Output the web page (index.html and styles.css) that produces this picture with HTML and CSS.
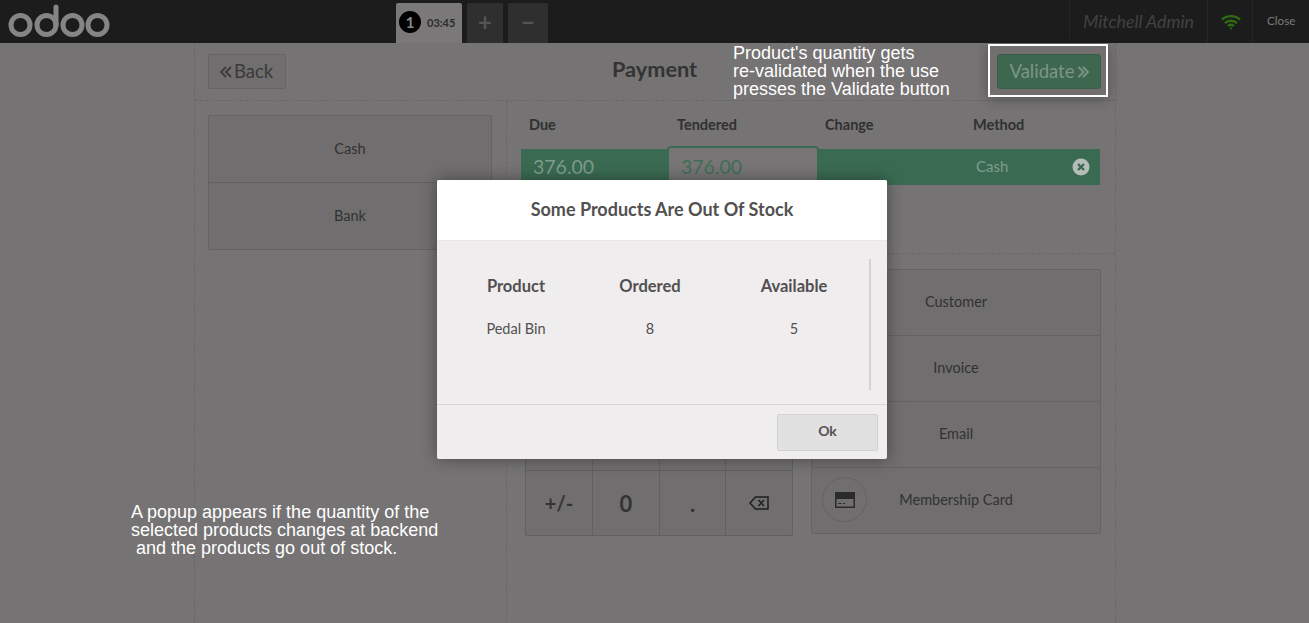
FILE: index.html

```html
<!DOCTYPE html>
<html lang="en">
<head>
  <meta charset="UTF-8" />
  <title>Point of Sale - Payment</title>
  <link rel="stylesheet" href="styles.css">
</head>
<body>
  <header class="topbar">
    <svg class="logo" width="112" height="43" viewBox="0 0 112 43" fill="none" stroke="#858585" stroke-width="5">
      <circle cx="20.5" cy="25" r="9.5" />
      <circle cx="46.5" cy="25" r="9.5" />
      <path d="M56 25V7" stroke-linecap="round" />
      <circle cx="72.5" cy="25" r="9.5" />
      <circle cx="97.5" cy="25" r="9.5" />
    </svg>
    <div class="orders">
      <div class="order-tab"><span class="order-num">1</span><span class="order-time">03:45</span></div>
      <div class="order-btn order-add">+</div>
      <div class="order-btn order-del">&minus;</div>
    </div>
    <div class="status">
      <div class="status-user">Mitchell Admin</div>
      <div class="status-wifi">
        <svg width="20" height="16" viewBox="0 0 20 16" fill="none" stroke="#2f6b12" stroke-width="2.4">
          <path d="M1 5.5C6 1 14 1 19 5.5" />
          <path d="M4 9C7.5 6 12.5 6 16 9" />
          <path d="M7 12C8.8 10.6 11.2 10.6 13 12" />
          <circle cx="10" cy="14.3" r="1.1" fill="#2f6b12" stroke="none" />
        </svg>
      </div>
      <div class="status-close">Close</div>
    </div>
  </header>

  <main class="screen">
    <div class="screen-top">
      <button class="back-btn">
        <svg width="12" height="12" viewBox="0 0 12 12" fill="none" stroke="#3a3a3a" stroke-width="1.9">
          <path d="M6 1L1 6L6 11M11 1L6 6L11 11" />
        </svg>
        Back
      </button>
      <h1 class="screen-title">Payment</h1>
      <button class="validate-btn">
        Validate
        <svg width="11" height="12" viewBox="0 0 11 12" fill="none" stroke="#7e9d8c" stroke-width="1.9">
          <path d="M0.5 1L5.5 6L0.5 11M5 1L10 6L5 11" />
        </svg>
      </button>
    </div>
    <div class="screen-body">
      <div class="left-pane">
        <div class="methods">
          <div class="method">Cash</div>
          <div class="method">Bank</div>
        </div>
      </div>
      <div class="right-pane">
        <div class="lines-wrap">
          <div class="lines-head">
            <span>Due</span><span>Tendered</span><span>Change</span><span>Method</span>
          </div>
          <div class="line">
            <div class="line-due">376.00</div>
            <div class="line-tendered">376.00</div>
            <div class="line-change"></div>
            <div class="line-method">Cash</div>
            <div class="line-remove">
              <svg width="18" height="18" viewBox="0 0 18 18">
                <circle cx="9" cy="9" r="8.5" fill="#b5bdb8" />
                <path d="M6 6L12 12M12 6L6 12" stroke="#3a6b52" stroke-width="2.4" />
              </svg>
            </div>
          </div>
        </div>
        <div class="controls">
          <div class="numpad">
            <div class="key">1</div><div class="key">2</div><div class="key">3</div><div class="key">+10</div>
            <div class="key">4</div><div class="key">5</div><div class="key">6</div><div class="key">+20</div>
            <div class="key">7</div><div class="key">8</div><div class="key">9</div><div class="key">+50</div>
            <div class="key key-sign">+/-</div>
            <div class="key key-bold">0</div>
            <div class="key key-bold">.</div>
            <div class="key">
              <svg width="20" height="16" viewBox="0 0 20 16" fill="none" stroke="#1f1f1f" stroke-width="1.5">
                <path d="M6.5 2H19V14H6.5L1 8Z" />
                <path d="M9.5 5L15 11M15 5L9.5 11" />
              </svg>
            </div>
          </div>
          <div class="actions">
            <div class="action">Customer</div>
            <div class="action">Invoice</div>
            <div class="action">Email</div>
            <div class="action">
              <span class="action-icon">
                <svg width="20" height="16" viewBox="0 0 20 16">
                  <path d="M0 0H20V16H0Z" fill="#2b2b2b" />
                  <path d="M1.5 7H18.5V14.5H1.5Z" fill="#706e6e" />
                  <path d="M3 11.5H6.5M8 11.5H10" stroke="#2b2b2b" stroke-width="1.2" />
                </svg>
              </span>
              Membership Card
            </div>
          </div>
        </div>
      </div>
    </div>
  </main>

  <div class="note note-validate">Product's quantity gets<br>re-validated when the use<br>presses the Validate button</div>
  <div class="highlight"></div>
  <div class="note note-popup">A popup appears if the quantity of the<br>selected products changes at backend<br>&nbsp;and the products go out of stock.</div>

  <div class="popup">
    <div class="popup-title">Some Products Are Out Of Stock</div>
    <div class="popup-body">
      <table class="stock-table">
        <tr><th class="col-product">Product</th><th class="col-ordered">Ordered</th><th class="col-available">Available</th></tr>
        <tr><td>Pedal Bin</td><td>8</td><td>5</td></tr>
      </table>
    </div>
    <div class="popup-footer">
      <button class="ok-btn">Ok</button>
    </div>
  </div>
</body>
</html>
```

FILE: styles.css

```css
html, body {
  height: 100%;
}
body {
  margin: 0;
  font-family: 'Lato', sans-serif;
  background-color: #757373;
  color: #2d2d2d;
  overflow: hidden;
  position: relative;
}
button {
  font-family: inherit;
}

/* top bar */
.topbar {
  display: flex;
  height: 43px;
  background-color: #1c1c1c;
}
.logo {
  display: block;
}
.orders {
  display: flex;
  align-items: flex-end;
  margin-left: 284px;
  gap: 5px;
}
.order-tab {
  display: flex;
  align-items: center;
  gap: 6px;
  width: 66px;
  height: 40px;
  padding: 0 0 2px 3px;
  box-sizing: border-box;
  background-color: #7a7878;
  border-radius: 2px 2px 0 0;
}
.order-num {
  width: 22px;
  height: 22px;
  border-radius: 50%;
  background-color: #000;
  color: #8a8a8a;
  font-size: 15px;
  font-weight: bold;
  line-height: 22px;
  text-align: center;
}
.order-time {
  font-size: 11px;
  font-weight: bold;
  color: #2c2c2c;
}
.order-btn {
  height: 40px;
  background-color: #2f2f2f;
  color: #555;
  font-size: 24px;
  font-weight: bold;
  line-height: 38px;
  text-align: center;
  border-radius: 2px 2px 0 0;
}
.order-add {
  width: 36px;
}
.order-del {
  width: 40px;
}
.status {
  display: flex;
  margin-left: auto;
  height: 43px;
  line-height: 43px;
}
.status > div {
  border-left: 1px solid #252525;
}
.status-user {
  width: 138px;
  padding-left: 13px;
  box-sizing: border-box;
  font-size: 17.8px;
  font-style: italic;
  color: #424242;
}
.status-wifi {
  display: flex;
  justify-content: center;
  align-items: center;
  width: 45px;
  padding-left: 1px;
  box-sizing: border-box;
}
.status-close {
  width: 57px;
  padding-left: 14px;
  padding-bottom: 2px;
  box-sizing: border-box;
  font-size: 11.7px;
  line-height: 41px;
  color: #7b7b7b;
}

/* payment screen */
.screen {
  width: 922px;
  height: 580px;
  margin-left: 194px;
  box-sizing: border-box;
  border-left: 1px dashed #696868;
  border-right: 1px dashed #696868;
}
.screen-top {
  display: flex;
  align-items: center;
  justify-content: space-between;
  height: 58px;
  padding: 0 14px 0 13px;
  box-sizing: border-box;
  border-bottom: 1px dashed #696868;
  position: relative;
}
.back-btn {
  display: flex;
  justify-content: center;
  align-items: center;
  gap: 2px;
  width: 78px;
  height: 35px;
  padding: 0 1px 2px 0;
  background-color: #706e6e;
  border: 1px solid #666464;
  border-radius: 2px;
  color: #3a3a3a;
  font-size: 18.5px;
}
.back-btn svg {
  margin-top: 2px;
}
.screen-title {
  position: absolute;
  left: 417px;
  top: 14px;
  margin: 0;
  font-size: 21.7px;
  font-weight: bold;
  line-height: 25px;
  color: #333;
}
.validate-btn {
  display: flex;
  justify-content: center;
  align-items: center;
  gap: 4px;
  width: 104px;
  height: 35px;
  padding: 0 0 2px 1px;
  background-color: #3a6b52;
  border: 1px solid #366049;
  border-radius: 3px;
  color: #7e9d8c;
  font-size: 18.5px;
}
.validate-btn svg {
  margin-top: 2px;
}
.screen-body {
  display: flex;
  height: 521px;
}
.left-pane {
  width: 312px;
  padding: 14px 13px 0;
  box-sizing: border-box;
  border-right: 1px dashed #696868;
  flex-shrink: 0;
}
.methods {
  width: 284px;
  box-sizing: border-box;
  border: 1px solid #646363;
  border-radius: 2px;
  background-color: #706e6e;
}
.method {
  height: 66px;
  line-height: 65px;
  text-align: center;
  font-size: 14.5px;
  color: #323232;
}
.method + .method {
  border-top: 1px solid #626161;
}
.right-pane {
  flex: 1;
  min-width: 0;
}
.lines-wrap {
  height: 153px;
  padding: 14px 15px 0 14px;
  box-sizing: border-box;
  border-bottom: 1px dashed #696868;
}
.lines-head {
  display: flex;
  padding-left: 8px;
  height: 20px;
  font-size: 14.5px;
  font-weight: bold;
  line-height: 20px;
  color: #303030;
}
.lines-head span {
  flex: 0 0 148px;
}
.line {
  display: flex;
  height: 36px;
  margin-top: 14px;
  background-color: #3a6b52;
  color: #7e9d8c;
  line-height: 36px;
}
.line-due {
  width: 146px;
  padding-left: 12px;
  box-sizing: border-box;
  font-size: 19.5px;
}
.line-tendered {
  width: 152px;
  height: 39px;
  margin-top: -3px;
  padding-left: 12px;
  box-sizing: border-box;
  background-color: #777575;
  border: 2px solid #3a6b52;
  border-bottom: none;
  border-radius: 4px 4px 0 0;
  color: #3f6f56;
  font-size: 19.5px;
  line-height: 37px;
}
.line-change {
  width: 148px;
}
.line-method {
  width: 100px;
  padding-left: 9px;
  box-sizing: border-box;
  font-size: 15px;
  line-height: 34px;
}
.line-remove {
  display: flex;
  align-items: center;
  margin-left: 5px;
}
.controls {
  display: flex;
  align-items: flex-start;
  padding: 15px 0 0 18px;
}
.numpad {
  display: grid;
  grid-template-columns: 67px 67px 66px 67px;
  grid-template-rows: repeat(3, 66px) 65px;
  margin-top: 3px;
  border: 1px solid #626161;
  border-top: none;
  border-left: none;
  border-radius: 2px;
  background-color: #706e6e;
}
.key {
  display: flex;
  justify-content: center;
  align-items: center;
  box-sizing: border-box;
  border-top: 1px solid #5f5e5e;
  border-left: 1px solid #626161;
  font-size: 20px;
  color: #2d2d2d;
}
.key-bold {
  font-weight: bold;
  font-size: 22px;
  color: #343434;
}
.key-sign {
  font-weight: bold;
  color: #333;
}
.actions {
  width: 290px;
  margin-left: 18px;
  box-sizing: border-box;
  border: 1px solid #646363;
  border-radius: 3px;
  background-color: #706e6e;
}
.action {
  position: relative;
  height: 65px;
  line-height: 63px;
  text-align: center;
  font-size: 14.5px;
  color: #323232;
}
.action + .action {
  border-top: 1px solid #646363;
}
.action-icon {
  position: absolute;
  left: 10px;
  top: 9px;
  display: flex;
  justify-content: center;
  align-items: center;
  width: 43px;
  height: 43px;
  border: 1px solid #646363;
  border-radius: 50%;
}

/* tour notes */
.note {
  position: absolute;
  font-family: 'Liberation Sans', sans-serif;
  font-size: 18px;
  line-height: 18px;
  color: #fff;
  white-space: nowrap;
}
.note-validate {
  left: 733px;
  top: 44px;
}
.note-popup {
  left: 131px;
  top: 503px;
}
.highlight {
  position: absolute;
  left: 988px;
  top: 44px;
  width: 120px;
  height: 53px;
  box-sizing: border-box;
  border: 2px solid #fff;
  background-color: rgba(120, 60, 60, 0.08);
  box-shadow: 0 2px 12px rgba(0, 0, 0, 0.3);
}

/* popup */
.popup {
  position: absolute;
  left: 437px;
  top: 180px;
  width: 450px;
  height: 279px;
  background-color: #efeded;
  border-radius: 2px;
  box-shadow: 0 0 16px rgba(0, 0, 0, 0.4);
  color: #525050;
  display: flex;
  flex-direction: column;
}
.popup-title {
  height: 61px;
  background-color: #fff;
  border-bottom: 1px solid #e8e6e6;
  box-sizing: border-box;
  text-align: center;
  font-size: 18px;
  font-weight: bold;
  line-height: 58px;
  border-radius: 2px 2px 0 0;
}
.popup-body {
  margin: 18px 16px 0 0;
  height: 131px;
  border-right: 2px solid #d3d2d2;
}
.stock-table {
  border-collapse: collapse;
  margin-left: 20px;
  width: 406px;
  table-layout: fixed;
}
.stock-table th {
  height: 53px;
  padding: 0;
  font-size: 16.5px;
  font-weight: bold;
}
.col-product {
  width: 118px;
}
.col-ordered {
  width: 150px;
}
.col-available {
  width: 138px;
}
.stock-table td {
  height: 33px;
  padding: 0;
  font-size: 14.5px;
  text-align: center;
}
.popup-footer {
  display: flex;
  justify-content: flex-end;
  margin-top: 14px;
  height: 55px;
  padding: 9px 9px 0 0;
  box-sizing: border-box;
  border-top: 1px solid #d8d7d7;
}
.ok-btn {
  width: 101px;
  height: 37px;
  padding: 0 0 4px;
  background-color: #e2e1e1;
  border: 1px solid #d3d2d2;
  border-radius: 2px;
  color: #525050;
  font-size: 14px;
  font-weight: bold;
}
```
